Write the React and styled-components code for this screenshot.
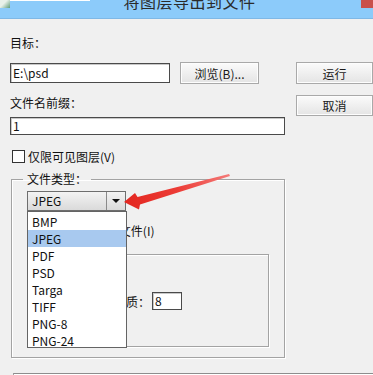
import React from "react";
import styled, { createGlobalStyle } from "styled-components";

const GlobalStyle = createGlobalStyle`
  html, body {
    margin: 0;
    padding: 0;
    background: #f0f0f0;
    width: 373px;
    height: 375px;
    overflow: hidden;
  }
  body {
    font-family: "Noto Sans CJK SC", "Noto Sans", sans-serif;
    font-size: 12px;
    color: #111;
  }
`;

const Window = styled.div`
  position: relative;
  width: 373px;
  height: 375px;
  overflow: hidden;
  background: #f0f0f0;
`;

const TitleBar = styled.div`
  position: relative;
  height: 19px;
  background: #8ccbfa;
  border-bottom: 1px solid #7fb8e6;
  box-sizing: border-box;
  overflow: hidden;
  display: flex;
  justify-content: center;
`;

const TitleText = styled.div`
  margin-top: -7px;
  margin-left: 6px;
  font-size: 16px;
  line-height: 16px;
  color: #2a2a2a;
  letter-spacing: 0.5px;
`;

const AppIcon = styled.div`
  position: absolute;
  left: 0;
  top: 0;
  width: 10px;
  height: 8px;
  background: linear-gradient(135deg, #e8f1ea 40%, #5f9c7a 100%);
`;

const TopStrip = styled.div`
  position: absolute;
  left: 0;
  top: 0;
  width: 90px;
  height: 1px;
  background: #fff;
`;

const CloseBox = styled.div`
  position: absolute;
  right: 0;
  top: 0;
  width: 12px;
  height: 8px;
  background: #c9504b;
`;

const Body = styled.div`
  display: flex;
  flex-direction: column;
`;

const TopRow = styled.div`
  display: flex;
`;

const LeftCol = styled.div`
  display: flex;
  flex-direction: column;
  width: 275px;
  margin-left: 10px;
`;

const RightCol = styled.div`
  display: flex;
  flex-direction: column;
  gap: 11px;
  margin-left: 11px;
  padding-top: 43px;
`;

const Label = styled.div`
  height: 16px;
  line-height: 16px;
  margin-top: ${(p) => p.$top || 0}px;
`;

const Row = styled.div`
  display: flex;
  align-items: center;
  height: ${(p) => p.$h || 22}px;
  margin-top: ${(p) => p.$top || 0}px;
`;

const TextInput = styled.div`
  box-sizing: border-box;
  width: ${(p) => p.$w}px;
  height: ${(p) => p.$h || 20}px;
  background: #fff;
  border: 1px solid #4a4a4a;
  box-shadow: inset 1px 1px 0 #c8c8c8;
  padding-left: 2px;
  font-size: 12px;
  line-height: ${(p) => (p.$h || 20) - 2}px;
  margin-top: ${(p) => p.$top || 0}px;
  margin-left: ${(p) => p.$left || 0}px;
`;

const Button = styled.div`
  box-sizing: border-box;
  width: ${(p) => p.$w}px;
  height: ${(p) => p.$h || 22}px;
  margin-left: ${(p) => p.$left || 0}px;
  border: 1px solid #a9a9a9;
  background: linear-gradient(#fbfbfb, #e4e4e4);
  box-shadow: inset 0 0 0 1px #fdfdfd;
  display: flex;
  align-items: center;
  justify-content: center;
  font-size: 12px;
  color: #1a1a1a;
`;

const CheckRow = styled.label`
  display: flex;
  align-items: center;
  gap: ${(p) => p.$gap || 3}px;
  height: 16px;
  margin-top: ${(p) => p.$top || 0}px;
  margin-left: ${(p) => p.$left || 0}px;
  white-space: nowrap;
`;

const Box = styled.span`
  box-sizing: border-box;
  width: 13px;
  height: 13px;
  background: #fff;
  border: 1px solid #333;
`;

const Group = styled.fieldset`
  box-sizing: border-box;
  margin: ${(p) => p.$top || 0}px 0 0 ${(p) => p.$left || 0}px;
  width: ${(p) => p.$w}px;
  height: ${(p) => p.$h}px;
  padding: 0 0 0 ${(p) => p.$pad || 0}px;
  border: 1px solid #a3a3a3;
  box-shadow: 1px 1px 0 #fff, inset 1px 1px 0 #fff;
  min-width: 0;
`;

const Legend = styled.legend`
  margin-left: ${(p) => p.$left || 0}px;
  padding: 0 4px;
  height: 16px;
  line-height: 16px;
  font-size: 12px;
`;

const ComboWrap = styled.div`
  position: relative;
  width: 99px;
  margin-top: 4px;
`;

const Combo = styled.div`
  box-sizing: border-box;
  display: flex;
  height: 20px;
  border: 1px solid #6e6e6e;
  background: linear-gradient(#f3f3f3, #dadada);
`;

const ComboText = styled.div`
  flex: 1;
  padding-left: 4px;
  line-height: 18px;
  font-size: 12px;
`;

const ComboArrow = styled.div`
  width: 18px;
  border-left: 1px solid #8a8a8a;
  display: flex;
  align-items: center;
  justify-content: center;
`;

const Triangle = styled.span`
  width: 0;
  height: 0;
  border-left: 4px solid transparent;
  border-right: 4px solid transparent;
  border-top: 4px solid #111;
`;

const DropList = styled.ul`
  position: absolute;
  top: 20px;
  left: 0;
  z-index: 5;
  box-sizing: border-box;
  width: 100px;
  height: 137px;
  margin: 0;
  padding: 1px 0 0;
  list-style: none;
  background: #fff;
  border: 1px solid #646464;
`;

const DropItem = styled.li`
  height: 17px;
  line-height: 17px;
  padding-left: 4px;
  font-size: 12px;
  background: ${(p) => (p.$active ? "#a8c9ef" : "transparent")};
`;

const QualityRow = styled.div`
  display: flex;
  align-items: center;
  margin-top: ${(p) => p.$top || 0}px;
  margin-left: ${(p) => p.$left || 0}px;
`;

const BottomGroup = styled.div`
  margin: 15px 0 0 13px;
  height: 6px;
  border-top: 1px solid #8d8d8d;
  border-left: 1px solid #a3a3a3;
  box-shadow: inset 1px 1px 0 #fff;
`;

const ArrowLayer = styled.svg`
  position: absolute;
  left: 0;
  top: 0;
  z-index: 10;
  pointer-events: none;
`;

const types = ["BMP", "JPEG", "PDF", "PSD", "Targa", "TIFF", "PNG-8", "PNG-24"];

export default function App() {
  return (
    <Window>
      <GlobalStyle />
      <TitleBar>
        <TopStrip />
        <AppIcon />
        <TitleText>将图层导出到文件</TitleText>
        <CloseBox />
      </TitleBar>
      <Body>
        <TopRow>
          <LeftCol>
            <Label $top={16}>目标：</Label>
            <Row $top={11}>
              <TextInput $w={160}>E:\psd</TextInput>
              <Button $w={79} $left={10}>浏览(B)...</Button>
            </Row>
            <Label $top={11}>文件名前缀：</Label>
            <TextInput $w={275} $h={18} $top={6}>1</TextInput>
            <CheckRow $top={13} $left={2}>
              <Box />
              仅限可见图层(V)
            </CheckRow>
            <Group $top={7} $left={1} $w={274} $h={187} $pad={15}>
              <Legend $left={-4}>文件类型：</Legend>
              <ComboWrap>
                <Combo>
                  <ComboText>JPEG</ComboText>
                  <ComboArrow>
                    <Triangle />
                  </ComboArrow>
                </Combo>
                <DropList>
                  {types.map((t) => (
                    <DropItem key={t} $active={t === "JPEG"}>
                      {t}
                    </DropItem>
                  ))}
                </DropList>
              </ComboWrap>
              <CheckRow $top={11} $gap={4} $left={3}>
                <Box />
                包含 ICC 配置文件(I)
              </CheckRow>
              <Group $top={8} $w={242} $h={101} $pad={0}>
                <Legend $left={4}>JPEG 选项：</Legend>
                <QualityRow $top={30} $left={86}>
                  品质：
                  <TextInput $w={30} $h={18} $left={2}>8</TextInput>
                </QualityRow>
              </Group>
            </Group>
          </LeftCol>
          <RightCol>
            <Button $w={77}>运行</Button>
            <Button $w={77} $h={21}>取消</Button>
          </RightCol>
        </TopRow>
        <BottomGroup />
      </Body>
      <ArrowLayer width="373" height="375" viewBox="0 0 373 375">
        <defs>
          <linearGradient id="arrowFill" x1="230" y1="175" x2="124" y2="203" gradientUnits="userSpaceOnUse">
            <stop offset="0" stopColor="#f47a78" />
            <stop offset="0.5" stopColor="#ec3c36" />
            <stop offset="1" stopColor="#e3261f" />
          </linearGradient>
        </defs>
        <polygon
          points="124,202 135,193 137.5,197 229,174 230,176 140,204.5 139,209.5"
          fill="url(#arrowFill)"
        />
      </ArrowLayer>
    </Window>
  );
}
